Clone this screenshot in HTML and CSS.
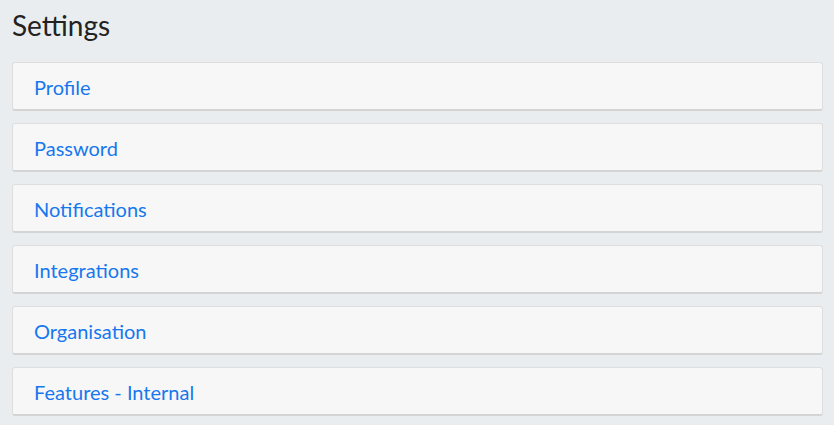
FILE: index.html
```html
<!DOCTYPE html>
<html>
<head>
    <title>Settings</title>
    <link rel="stylesheet" href="styles.css">
</head>
<body>
    <h1 class="page-title">Settings</h1>
    <div class="settings-list">
        <a class="settings-item" href="#">Profile</a>
        <a class="settings-item" href="#">Password</a>
        <a class="settings-item" href="#">Notifications</a>
        <a class="settings-item" href="#">Integrations</a>
        <a class="settings-item" href="#">Organisation</a>
        <a class="settings-item" href="#">Features - Internal</a>
    </div>
</body>
</html>
```

FILE: styles.css
```css
body {
    font-family: Lato, "Open Sans", sans-serif;
    margin: 0;
    padding: 0 11px 0 12px;
    background-color: #e9edf0;
    color: #222;
}

.page-title {
    font-size: 28px;
    font-weight: 400;
    margin: 0;
    padding: 9px 0 20px 0;
    line-height: 33px;
}

.settings-list {
    display: flex;
    flex-direction: column;
    gap: 12px;
}

.settings-item {
    display: block;
    background-color: #f7f7f7;
    border: 1px solid #dedede;
    border-bottom: 2px solid #d4d4d4;
    border-radius: 3px;
    padding: 0 21px;
    height: 46px;
    line-height: 48px;
    font-size: 20px;
    color: #1677ee;
    text-decoration: none;
}
```
